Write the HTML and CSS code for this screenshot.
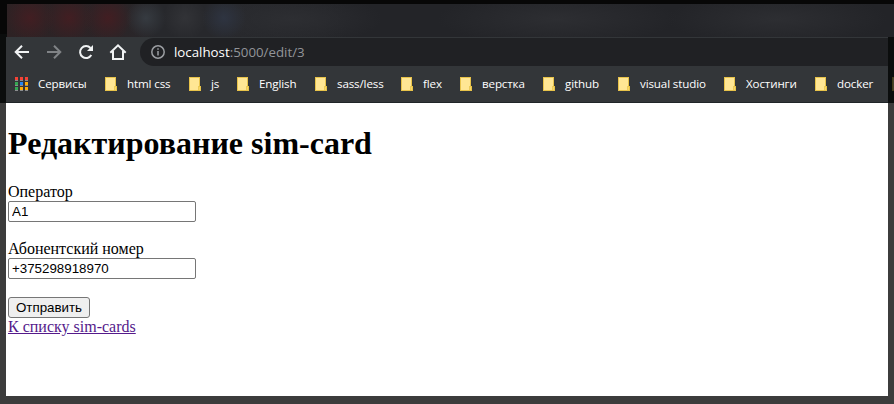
FILE: index.html
```html
<!DOCTYPE html>
<html lang="ru">
<head>
<meta charset="utf-8">
<title>Редактирование sim-card</title>
<link rel="stylesheet" href="styles.css">
</head>
<body>
<svg class="defs" width="0" height="0"><symbol id="folder" viewBox="0 0 12 14"><path fill="#e8c34a" d="M0 0h11v9h1v5H0z"/><path fill="#ffe694" d="M1 1h9v8h-.8v4H1z"/><path fill="#f8d765" d="M10 10h1v3h-1z"/></symbol></svg>
<div class="tabs"></div>
<div class="window">
<header class="chrome">
<div class="toolbar">
<nav class="nav">
<svg width="16" height="16" viewBox="0 0 16 16"><path d="M15 8H2M8 1.7L1.7 8 8 14.3"/></svg>
<svg class="off" width="16" height="16" viewBox="0 0 16 16"><path d="M1 8h13M8 1.7L14.3 8 8 14.3"/></svg>
<svg width="16" height="16" viewBox="0 0 16 16"><path d="M13.3 11A6 6 0 1 1 12.5 4"/><path class="solid" d="M15 1v6H9z"/></svg>
<svg width="18" height="16" viewBox="0 0 18 16"><path d="M1.3 8.8L9 1.4l7.7 7.4M4 7v8h10V7"/></svg>
</nav>
<div class="address">
<svg width="14" height="14" viewBox="0 0 14 14"><circle cx="7" cy="7" r="6.2"/><path d="M7 6v4.5M7 3.2v1.6"/></svg>
<span class="url"><b>localhost</b>:5000/edit/3</span>
</div>
</div>
<div class="bookmarks">
<div class="mark apps"><svg width="14" height="14" viewBox="0 0 14 14"><path fill="#f44336" d="M0 0h3v3H0zM5 0h3v3H5zM10 0h3v3h-3z"/><path fill="#34a853" d="M0 5h3v3H0zM0 10h3v3H0z"/><path fill="#2087f5" d="M5 5h3v3H5z"/><path fill="#fbad08" d="M10 5h3v3h-3zM5 10h3v3H5zM10 10h3v3h-3z"/><path fill="#8b8d8f" d="M0 3h3v1H0zM5 3h3v1H5zM10 3h3v1h-3zM0 8h3v1H0zM5 8h3v1H5zM10 8h3v1h-3zM0 13h3v1H0zM5 13h3v1H5zM10 13h3v1h-3z"/></svg><span>Сервисы</span></div>
<div class="mark"><svg><use href="#folder"/></svg><span>html css</span></div>
<div class="mark"><svg><use href="#folder"/></svg><span>js</span></div>
<div class="mark"><svg><use href="#folder"/></svg><span>English</span></div>
<div class="mark"><svg><use href="#folder"/></svg><span>sass/less</span></div>
<div class="mark"><svg><use href="#folder"/></svg><span>flex</span></div>
<div class="mark"><svg><use href="#folder"/></svg><span>верстка</span></div>
<div class="mark"><svg><use href="#folder"/></svg><span>github</span></div>
<div class="mark"><svg><use href="#folder"/></svg><span>visual studio</span></div>
<div class="mark"><svg><use href="#folder"/></svg><span>Хостинги</span></div>
<div class="mark"><svg><use href="#folder"/></svg><span>docker</span></div>
<div class="mark dim"><svg><use href="#folder"/></svg></div>
</div>
</header>
<main class="page">
<h1>Редактирование sim-card</h1>
<form>
<label for="op">Оператор</label>
<input id="op" value="A1">
<label for="num">Абонентский номер</label>
<input id="num" value="+375298918970">
<button type="button">Отправить</button>
</form>
<a href="#">К списку sim-cards</a>
</main>
</div>
</body>
</html>
```
FILE: styles.css
```css
* { box-sizing: border-box; }
body {
  margin: 0;
  width: 894px;
  height: 404px;
  overflow: hidden;
  background: linear-gradient(#070707 34px, #0b0d0d 34px, #0b0d0d 103px, #3c3c3c 103px);
}
.defs { display: block; height: 0; }
.tabs {
  height: 33px;
  margin: 4px 0 0 7px;
  background:
    radial-gradient(circle at 23px 14px, #421e22, transparent 24px),
    radial-gradient(circle at 62px 14px, #421e22, transparent 24px),
    radial-gradient(circle at 101px 14px, #421e22, transparent 24px),
    radial-gradient(circle at 139px 14px, #363b41, transparent 20px),
    radial-gradient(circle at 178px 14px, #323337, transparent 22px),
    radial-gradient(circle at 217px 14px, #2e3441, transparent 22px),
    radial-gradient(ellipse 90px 26px at 285px 15px, #2d2e32, transparent),
    radial-gradient(ellipse 120px 26px at 550px 15px, #2d2e32, transparent),
    radial-gradient(ellipse 110px 26px at 770px 15px, #2d2e32, transparent),
    linear-gradient(90deg, #2d2224, #2b2427 110px, #27282c 150px, #27282c 230px, #232428 340px);
}
.window { width: 882px; height: 359px; margin-left: 6px; background: #fff; }
.chrome {
  height: 66px;
  background: #333639;
  border-bottom: 1px solid #202528;
}
.toolbar { display: flex; height: 29px; padding-top: 1px; }
.nav { display: flex; align-items: center; gap: 16px; width: 134px; padding-left: 8px; }
.nav svg { fill: none; stroke: #f1f3f4; stroke-width: 2; flex: none; }
.nav svg:last-child { margin-left: -1px; }
.nav .off { stroke: #808386; }
.nav .solid { fill: #f1f3f4; stroke: none; }
.address {
  flex: 1;
  display: flex;
  align-items: center;
  gap: 9px;
  padding-left: 11px;
  background: #202124;
  border-radius: 14px 0 0 14px;
}
.address svg { fill: none; stroke: #9b9ea2; stroke-width: 1.5; }
.url { font: 13.3px/28px "Open Sans", sans-serif; color: #929599; }
.url b { font-weight: 400; color: #fff; }
.bookmarks {
  display: grid;
  grid-template-columns: 90px 84px 48px 78px 86px 59px 83px 75px 106px 91px 77px 12px;
  width: 888px;
  height: 36px;
  padding-left: 9px;
}
.mark {
  display: flex;
  align-items: center;
  gap: 10px;
  color: #fff;
  font: 11.6px/16px "Open Sans", sans-serif;
  letter-spacing: -.13px;
  white-space: nowrap;
}
.mark svg { width: 12px; height: 14px; flex: none; }
.apps svg { width: 14px; }
.apps { gap: 9px; }
.dim { opacity: .25; }
.page {
  padding: 22px 2px 0;
  color: #000;
  font: 16px/18px "Liberation Serif", serif;
}
h1 { margin: 0 0 21px; font-size: 32px; line-height: 37px; }
label, input, button { display: block; }
input {
  width: 188px;
  height: 21px;
  margin: 0 0 18px;
  padding: 1px 3px;
  border: 1px solid #767676;
  border-radius: 2px;
  background: #fff;
  color: #000;
  font: 13.333px "Liberation Sans", sans-serif;
}
button {
  width: 82px;
  height: 21px;
  padding: 0;
  border: 1px solid #767676;
  border-radius: 3px;
  background: #efefef;
  color: #000;
  font: 13.333px "Liberation Sans", sans-serif;
}
a { display: block; color: #551a8b; text-decoration: underline; }
```
